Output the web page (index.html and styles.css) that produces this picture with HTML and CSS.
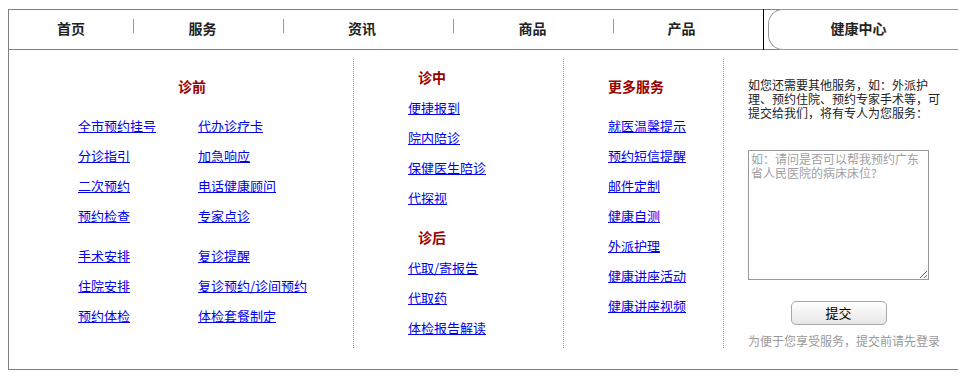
FILE: index.html
```html
<!DOCTYPE html>
<html lang="zh-CN">
<head>
<meta charset="utf-8">
<title>健康中心</title>
<link rel="stylesheet" href="styles.css">
</head>
<body>
<div class="panel">
  <div class="nav">
    <div class="nav-item w1">首页</div>
    <span class="sep"></span>
    <div class="nav-item w2">服务</div>
    <span class="sep"></span>
    <div class="nav-item w3">资讯</div>
    <span class="sep"></span>
    <div class="nav-item w4">商品</div>
    <span class="sep"></span>
    <div class="nav-item w5">产品</div>
    <span class="divider"></span>
    <div class="nav-tab">健康中心</div>
  </div>
  <div class="cols">
    <div class="col col-pre">
      <h3 class="col-title title-pre">诊前</h3>
      <div class="link-grid">
        <a href="#">全市预约挂号</a><a href="#">代办诊疗卡</a>
        <a href="#">分诊指引</a><a href="#">加急响应</a>
        <a href="#">二次预约</a><a href="#">电话健康顾问</a>
        <a href="#">预约检查</a><a href="#">专家点诊</a>
      </div>
      <div class="link-grid group2">
        <a href="#">手术安排</a><a href="#">复诊提醒</a>
        <a href="#">住院安排</a><a href="#">复诊预约/诊间预约</a>
        <a href="#">预约体检</a><a href="#">体检套餐制定</a>
      </div>
    </div>
    <div class="col col-mid">
      <h3 class="col-title indent">诊中</h3>
      <div class="link-list first">
        <a href="#">便捷报到</a>
        <a href="#">院内陪诊</a>
        <a href="#">保健医生陪诊</a>
        <a href="#">代探视</a>
      </div>
      <h3 class="col-title indent second">诊后</h3>
      <div class="link-list first">
        <a href="#">代取/寄报告</a>
        <a href="#">代取药</a>
        <a href="#">体检报告解读</a>
      </div>
    </div>
    <div class="col col-more">
      <h3 class="col-title">更多服务</h3>
      <div class="link-list more">
        <a href="#">就医温馨提示</a>
        <a href="#">预约短信提醒</a>
        <a href="#">邮件定制</a>
        <a href="#">健康自测</a>
        <a href="#">外派护理</a>
        <a href="#">健康讲座活动</a>
        <a href="#">健康讲座视频</a>
      </div>
    </div>
    <div class="col col-form">
      <div class="form-box">
        <p class="intro"><span class="intro-line">如您还需要其他服务，如：外派护</span><span class="intro-line">理、预约住院、预约专家手术等，可</span><span class="intro-line">提交给我们，将有专人为您服务：</span></p>
        <textarea class="ask" placeholder="如：请问是否可以帮我预约广东省人民医院的病床床位?"></textarea>
        <div class="btn-row"><button class="submit" type="button">提交</button></div>
        <p class="note">为便于您享受服务，提交前请先登录</p>
      </div>
    </div>
  </div>
</div>
</body>
</html>
```
FILE: styles.css
```css
* { box-sizing: border-box; }
body {
  margin: 8px;
  font-family: "Noto Sans CJK SC", "DejaVu Sans", sans-serif;
  background: #fff;
}
.panel {
  width: 951px;
  margin-top: 1px;
  border: 1px solid #808080;
  background: #fff;
}
.nav {
  display: flex;
  height: 40px;
  border-bottom: 1px solid #808080;
}
.nav-item {
  display: flex;
  align-items: center;
  justify-content: center;
  font-size: 14px;
  font-weight: bold;
  color: #222;
  padding-bottom: 4px;
}
.w1 { width: 124px; }
.w2 { width: 149px; padding-right: 12px; }
.w3 { width: 169px; padding-right: 13px; }
.w4 { width: 159px; padding-right: 2px; }
.w5 { width: 149px; padding-right: 14px; }
.sep {
  width: 1px;
  height: 14px;
  margin-top: 9px;
  background: #999;
  align-self: flex-start;
}
.divider {
  width: 1px;
  background: #000;
  margin: -1px 0;
}
.nav-tab {
  flex: 1;
  margin: -1px 0 -1px 4px;
  border: 1px solid #999;
  border-right: none;
  border-radius: 15px 0 0 15px;
  display: flex;
  align-items: center;
  justify-content: center;
  padding-right: 10px;
  padding-bottom: 4px;
  font-size: 14px;
  font-weight: bold;
  color: #222;
  background: #fff;
}
.cols {
  display: flex;
  height: 319px;
  padding: 9px 0 21px;
}
.col {
  height: 289px;
}
.col-pre { width: 345px; border-right: 1px dotted #999; padding-top: 17px; }
.col-mid { width: 210px; border-right: 1px dotted #999; padding: 8px 0 0 54px; }
.col-more { width: 160px; border-right: 1px dotted #999; padding: 17px 0 0 44px; }
.col-form { flex: 1; padding: 19px 0 0 24px; }
.col-title {
  margin: 0;
  font-size: 14px;
  line-height: 20px;
  font-weight: bold;
  color: #990000;
}
.title-pre { padding-left: 169px; }
.indent { padding-left: 10px; }
.second { margin-top: 15px; }
a {
  color: #0000ee;
  text-decoration: underline;
  font-size: 13px;
}
.link-grid {
  display: grid;
  grid-template-columns: 120px auto;
  grid-auto-rows: 30px;
  align-items: center;
  justify-items: start;
  padding-left: 69px;
  margin-top: 14px;
}
.link-grid.group2 { margin-top: 10px; }
.link-list {
  display: grid;
  grid-auto-rows: 30px;
  align-items: center;
  justify-items: start;
}
.link-list.first { margin-top: 5px; }
.link-list.more { margin-top: 14px; }
.form-box { width: 181px; }
.intro {
  margin: 0;
  font-size: 12px;
  line-height: 14px;
  color: #222;
  white-space: nowrap;
}
.intro-line {
  display: block;
  height: 14px;
}
.ask {
  display: block;
  margin-top: 30px;
  width: 181px;
  height: 130px;
  border: 1px solid #999;
  padding: 1px 2px;
  font-family: "Noto Sans CJK SC", "DejaVu Sans", sans-serif;
  font-size: 12px;
  line-height: 14px;
  color: #333;
}
.ask::placeholder { color: #a0a0a0; }
.btn-row {
  margin-top: 19px;
  text-align: center;
}
.submit {
  width: 96px;
  height: 24px;
  border: 1px solid #a8a8a8;
  border-radius: 5px;
  background: linear-gradient(#ffffff, #e6e6e6);
  font-family: "Noto Sans CJK SC", "DejaVu Sans", sans-serif;
  font-size: 13px;
  line-height: 20px;
  color: #000;
  padding: 0;
}
.note {
  margin: 9px 0 0;
  font-size: 12px;
  line-height: 14px;
  color: #999;
  white-space: nowrap;
}
```
